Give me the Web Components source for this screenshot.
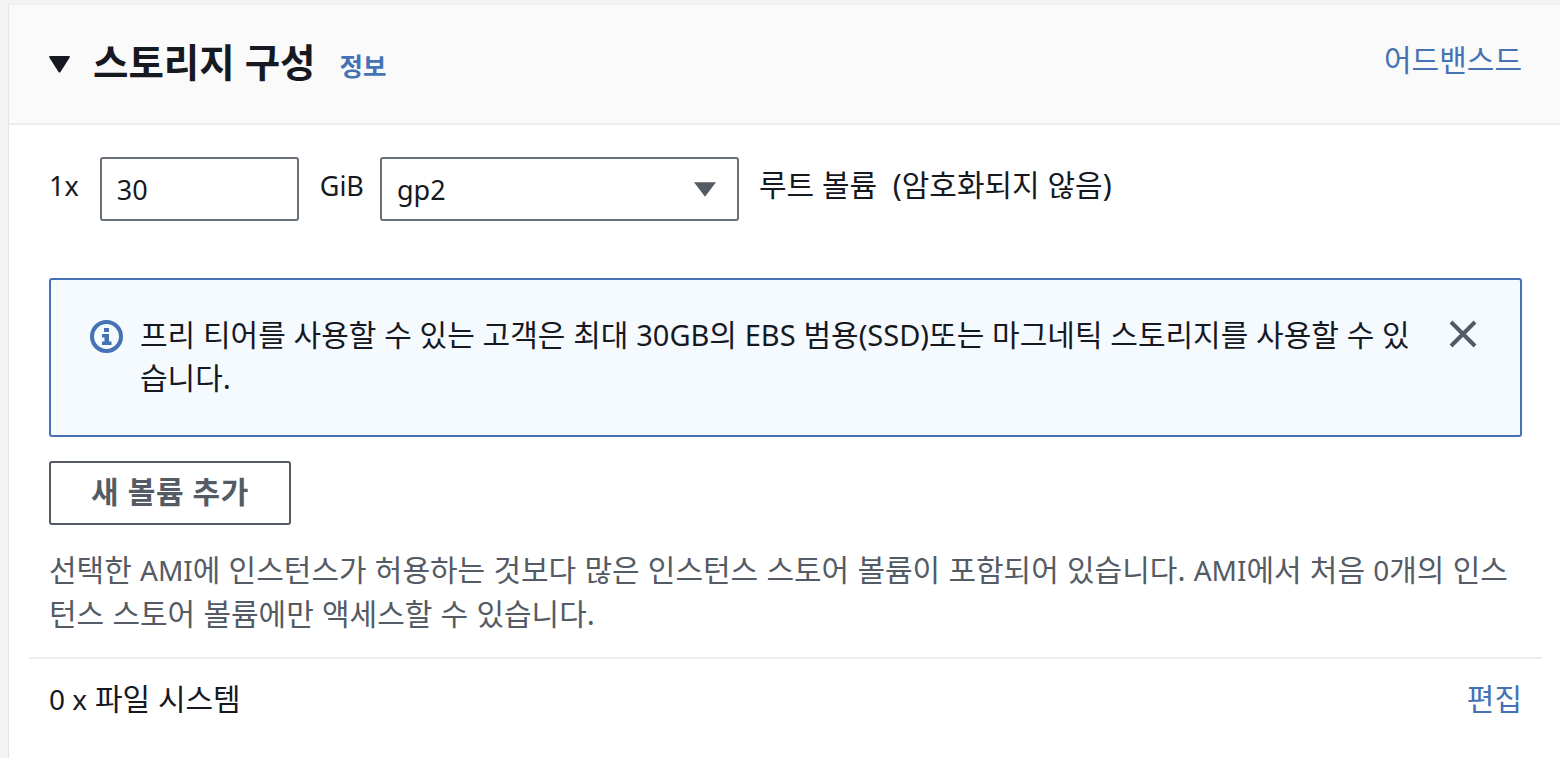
<!DOCTYPE html>
<html lang="ko">
<head>
<meta charset="utf-8">
<title>스토리지 구성</title>
<style>
    html, body{
        margin: 0;
        height: 100%;
        overflow: hidden;
        background-color: #f2f3f3;
        font-family: "Noto Sans", "Noto Sans CJK KR", sans-serif;
        font-size: 30px;
        color: #16191f;
    }
</style>
</head>
<body>
<storage-panel></storage-panel>
<script>
const panelTemplate = document.createElement('template');
panelTemplate.innerHTML = `
<style>
    :host{
        display: block;
        margin: 4px 0 0 8px;
        height: 754px;
        background-color: #fff;
        border-left: 1px solid #e4e6e6;
        border-top: 1px solid #eaeded;
    }
    .en{
        font-size: 29px;
    }
    .volume .en{
        font-size: 27px;
    }
    .note .en, .files .en{
        font-size: 28px;
    }
    .header{
        height: 120px;
        box-sizing: border-box;
        background-color: #fafafa;
        border-bottom: 2px solid #eaeded;
        display: flex;
        align-items: center;
        justify-content: space-between;
        padding: 0 38px 4px 40px;
    }
    .title{
        display: flex;
        align-items: center;
    }
    .title svg{
        width: 21px;
        height: 17px;
        margin: 4px 23px 0 0;
    }
    h2{
        margin: 0;
        font-size: 38.500px;
        font-weight: 700;
        line-height: 48px;
    }
    .info{
        margin: 4px 0 0 24px;
        font-size: 25.500px;
        font-weight: 700;
        color: #4472b4;
    }
    .advanced{
        color: #4472b4;
        margin-bottom: 8px;
    }
    .body{
        padding: 32px 38px 0 40px;
    }
    .volume{
        display: flex;
        align-items: flex-start;
    }
    .label{
        line-height: 58px;
    }
    .row-note{
        margin-left: 20px;
        line-height: 56px;
    }
    .field{
        box-sizing: border-box;
        height: 64px;
        border: 2px solid #687078;
        border-radius: 3px;
        display: flex;
        align-items: center;
        justify-content: space-between;
        padding: 0 15px;
    }
    .size{
        width: 199px;
        margin: 0 21px;
    }
    .type{
        width: 359px;
        margin-left: 16px;
        padding-right: 21px;
    }
    .type svg{
        width: 22px;
        height: 15px;
    }
    .alert{
        margin-top: 57px;
        box-sizing: border-box;
        height: 159px;
        background-color: #f5faff;
        border: 2px solid #4472b4;
        border-radius: 3px;
        display: flex;
        align-items: flex-start;
        padding: 33px 42px 0 39px;
    }
    .alert .icon{
        width: 33px;
        height: 33px;
        flex: none;
        margin: 7px 17px 0 0;
    }
    .alert p{
        margin: 0;
        flex: 1;
        line-height: 43px;
    }
    .alert .close{
        width: 30px;
        height: 30px;
        flex: none;
        margin: 6px 0 0 35px;
    }
    button{
        display: block;
        margin-top: 24px;
        width: 242px;
        height: 64px;
        box-sizing: border-box;
        background-color: #fff;
        border: 2px solid #545b64;
        border-radius: 3px;
        font: 700 30px "Noto Sans", "Noto Sans CJK KR", sans-serif;
        letter-spacing: 0.600px;
        color: #545b64;
        padding: 0 0 6px;
    }
    .note{
        margin: 23px 0 0;
        line-height: 43px;
        word-spacing: 0.400px;
        color: #545b64;
    }
    .files{
        margin: 22px -20px 0 -20px;
        border-top: 2px solid #eaeded;
        display: flex;
        justify-content: space-between;
        padding: 17px 20px 0;
        line-height: 46px;
    }
    .edit{
        color: #4472b4;
    }
</style>
<div class="header">
    <div class="title">
        <svg viewBox="0 0 21 17"><path d="M0 1 Q0 0 1.500 0 H19.500 Q21 0 21 1 L11.500 16 Q10.500 17 9.500 16 Z" fill="#16191f"/></svg>
        <h2>스토리지 구성</h2>
        <span class="info">정보</span>
    </div>
    <span class="advanced">어드밴스드</span>
</div>
<div class="body">
    <div class="volume">
        <span class="label en">1x</span>
        <div class="field size en">30</div>
        <span class="label en">GiB</span>
        <div class="field type">
            <span class="en">gp2</span>
            <svg viewBox="0 0 24 16"><path d="M0 0 H24 L12 16 Z" fill="#545b64"/></svg>
        </div>
        <span class="label row-note">루트 볼륨&nbsp; (암호화되지 않음)</span>
    </div>
    <div class="alert">
        <svg class="icon" viewBox="0 0 33 33">
            <circle cx="16.500" cy="16.500" r="14.500" fill="none" stroke="#4472b4" stroke-width="4"/>
            <rect x="14" y="8" width="5" height="4" fill="#4472b4"/>
            <path d="M12 14 H19 V21.500 H21.500 V25 H12 V21.500 H14.500 V17.500 H12 Z" fill="#4472b4"/>
        </svg>
        <p>프리 티어를 사용할 수 있는 고객은 최대 <span class="en">30GB</span>의 <span class="en">EBS</span> 범용<span class="en">(SSD)</span>또는 마그네틱 스토리지를 사용할 수 있습니다.</p>
        <svg class="close" viewBox="0 0 30 30"><path d="M3 3 L27 27 M27 3 L3 27" fill="none" stroke="#545b64" stroke-width="4"/></svg>
    </div>
    <button>새 볼륨 추가</button>
    <p class="note">선택한 <span class="en">AMI</span>에 인스턴스가 허용하는 것보다 많은 인스턴스 스토어 볼륨이 포함되어 있습니다. <span class="en">AMI</span>에서 처음 <span class="en">0</span>개의 인스턴스 스토어 볼륨에만 액세스할 수 있습니다.</p>
    <div class="files">
        <span><span class="en">0 x</span> 파일 시스템</span>
        <span class="edit">편집</span>
    </div>
</div>
`;

class StoragePanel extends HTMLElement{
    constructor(){
        super();
        this.attachShadow({mode: 'open'});
        this.shadowRoot.appendChild(panelTemplate.content.cloneNode(true));
    }
}

window.customElements.define('storage-panel', StoragePanel);
</script>
</body>
</html>
